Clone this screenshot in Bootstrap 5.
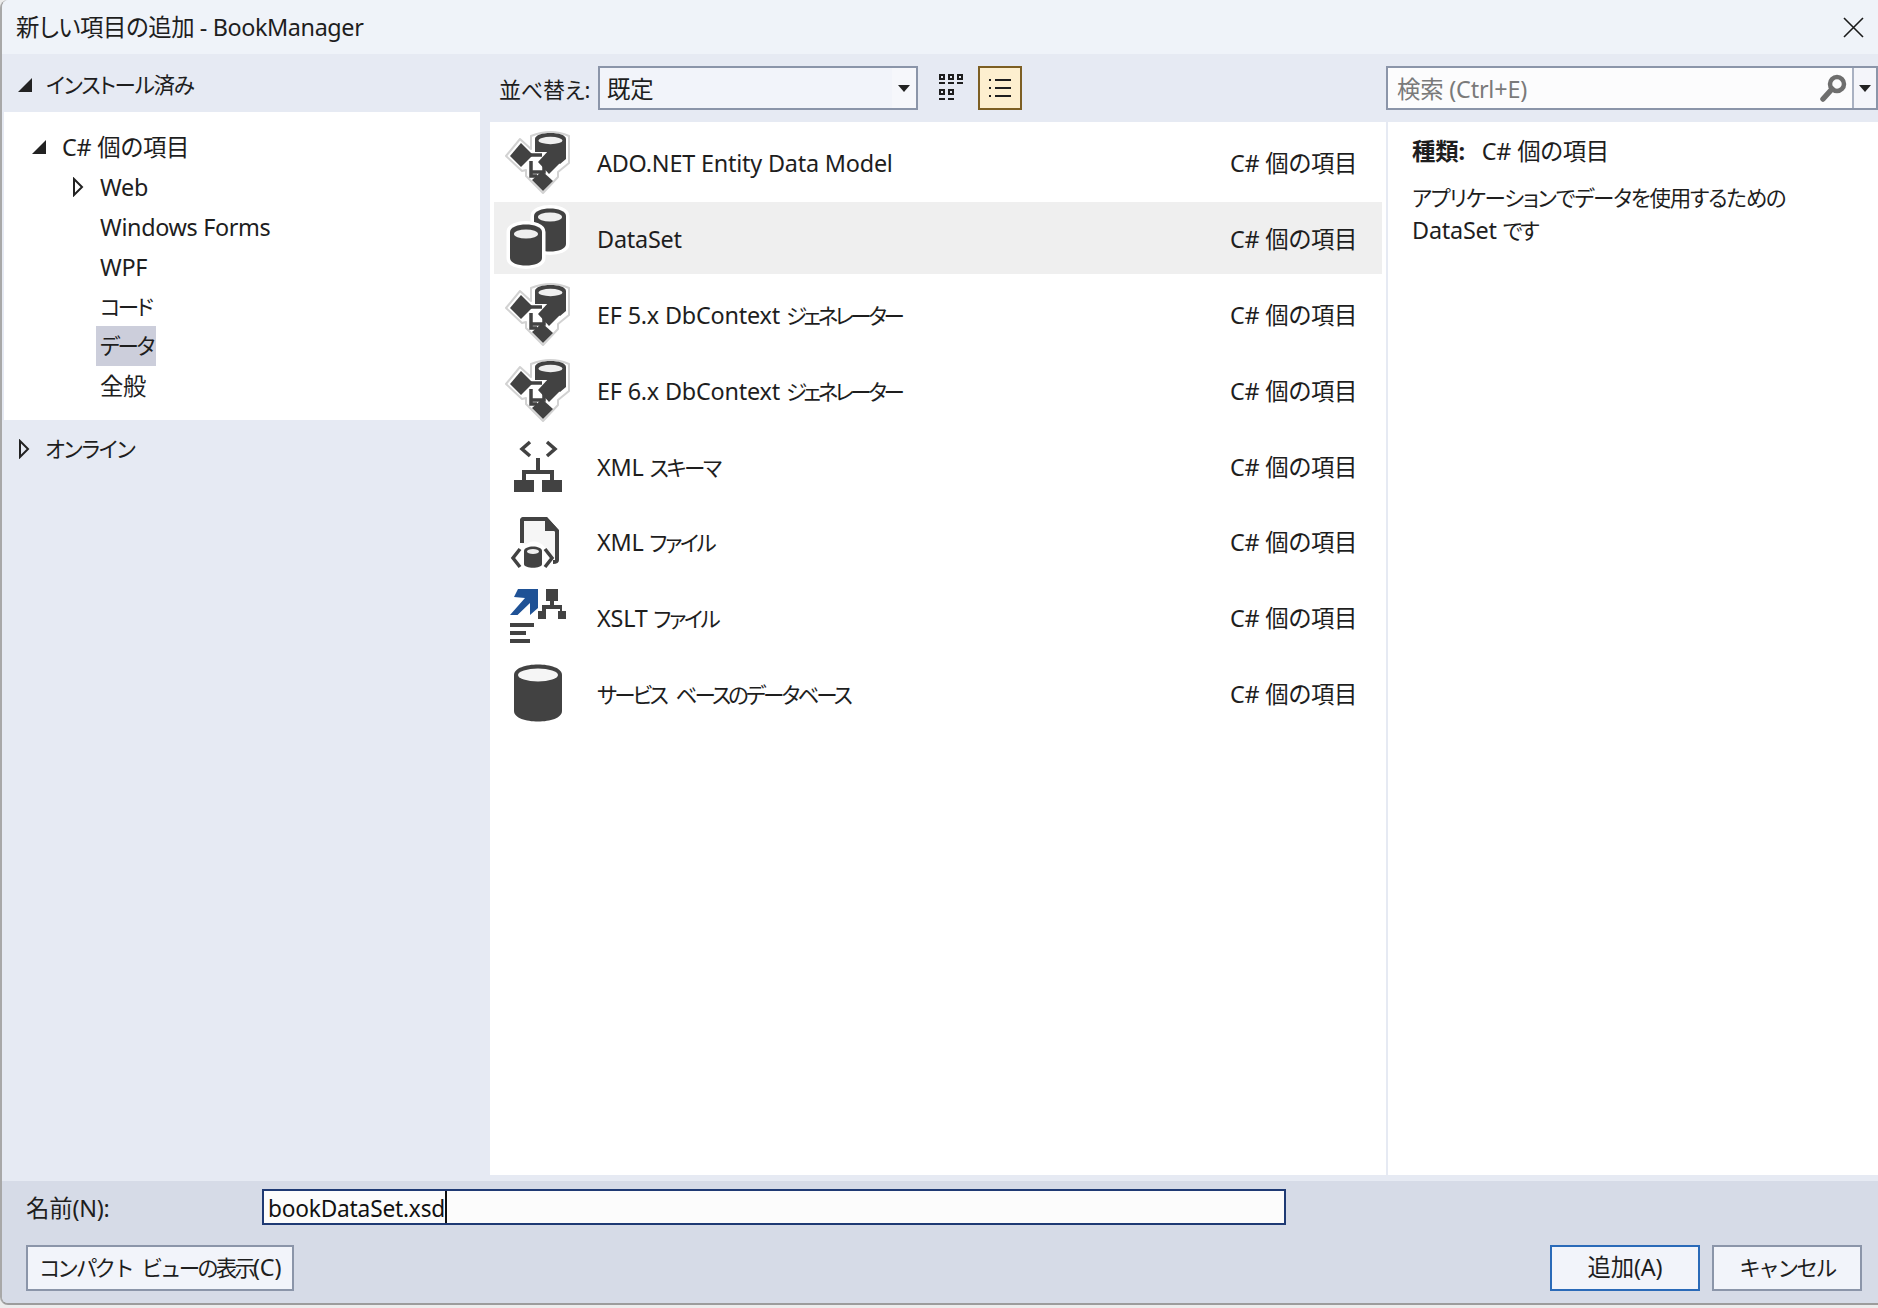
<!DOCTYPE html>
<html lang="ja">
<head>
<meta charset="utf-8">
<title>新しい項目の追加 - BookManager</title>
<link href="https://cdn.jsdelivr.net/npm/bootstrap@5.3.0/dist/css/bootstrap.min.css" rel="stylesheet">
<style>
html,body{height:100%;margin:0}
body{background:#ececec;overflow:hidden;font-family:"Noto Sans","Noto Sans CJK JP",sans-serif;font-size:23.4px;line-height:1.2;color:#1e1e1e;font-feature-settings:"palt";letter-spacing:-.2px}
.kn{font-size:21.5px;letter-spacing:-2.4px}
.kn2{font-size:21.5px;letter-spacing:-1.2px}
.kn3{font-size:21.5px;letter-spacing:-3.4px}
.knw{font-size:21.5px;letter-spacing:-2.9px;word-spacing:7px}
.dlg{height:1305px;background:#e6eaf3;border-left:2px solid #a8a8a8;border-bottom:2px solid #9c9c9c;border-radius:8px 0 0 8px;overflow:hidden}
.tbar{height:54px;flex:none;background:#eff3f9;padding:0 14px}
.tbartext{letter-spacing:-.4px}
.mainrow{flex:1 1 0;min-height:0}
.leftcol{width:488px;flex:none}
.midcol{width:896px;flex:none}
.rightcol{flex:1 1 0;min-width:0}
.treehead{height:58px;padding-left:16px;padding-top:3px}
.treehead2{padding-top:0}
.headgap{margin-right:14px}
.headgap2{margin-right:15px}
.treebox{height:308px;background:#fff;margin:0 10px 0 2px;padding-top:15px}
.treeitem{height:39.8px;display:flex;align-items:center;white-space:nowrap}
.arrowcell{flex:none;display:flex;align-items:center}
.webarrow{width:96px;padding-left:68px}
.treetxt{margin-left:92px;padding:1px 4px 0;height:100%;display:flex;align-items:center;letter-spacing:-.35px}
.seltree{background:#cccedb;width:60px}
.toolzone{height:68px;flex:none}
.sortlabel{margin-left:9px;width:99px;flex:none;font-size:22px;padding-top:2px;white-space:nowrap}
.combo{width:320px;height:44px;border:2px solid #8b95a9;background:#f2f4fa;padding-left:7px}
.combotext{flex:1 1 0;padding-top:2px}
.comboarrow{width:24px;height:100%;background:#f6f7fb;justify-content:center}
.iconbtn{width:44px;height:44px;flex:none;display:flex;align-items:center;justify-content:center}
.gridbtn{margin-left:11px}
.listbtn{margin-left:5px;background:#fdefcf;border:2px solid #7d5f23}
.itemlist{flex:1 1 0;background:#fff;padding:4px 4px 0}
.itemrow{height:72px;margin-bottom:3.9px;padding-left:6px}
.itemrow.hl{background:#efefef}
.itemrow svg{flex:none}
.itemname{margin-left:25px;flex:1 1 0;padding-top:2px}
.itemkind{width:152px;flex:none;padding-top:2px}
.searchbox{height:44px;border:2px solid #8b95a9;background:#fcfcfd}
.searchph{flex:1 1 0;color:#7a7a7a;padding-left:9px;padding-top:2px}
.searchglass{width:36px;display:flex;align-items:center;justify-content:center}
.searchdrop{width:24px;height:100%;border-left:2px solid #a9b1c2;background:#f4f5fa;display:flex;align-items:center;justify-content:center}
.infopane{flex:1 1 0;background:#fff;border-left:2px solid #e6eaf3;padding:15px 0 0 24px}
.infokind{margin-bottom:18px;height:26px}
.infokind b{margin-right:17px;font-weight:700}
.infotext{line-height:32px}
.gapstrip{height:6px;flex:none}
.footzone{height:122px;flex:none;background:#d6dbe7;padding:8px 16px 0 24px}
.namerow{height:36px}
.namelabel{width:236px;flex:none;padding-top:2px}
.namefield{width:1024px;height:36px;background:#fcfcfc;border:2px solid #1f3a74;padding-left:4px;color:#111}
.namecaret{border-right:2px solid #111;height:100%;display:flex;align-items:center;font-size:22.7px;padding-top:3px}
.btnrow{margin-top:20px}
.dlgbtn{--bs-btn-padding-y:0;--bs-btn-padding-x:0;--bs-btn-border-radius:0;--bs-btn-border-width:2px;--bs-btn-border-color:#8b95a9;--bs-btn-bg:#f2f4fa;--bs-btn-color:#1e1e1e;--bs-btn-font-size:23.4px;height:46px;font-family:inherit;letter-spacing:inherit;white-space:nowrap}
.btncompact{width:268px}
.btnadd{width:150px;--bs-btn-border-color:#2a6ab8}
.btncancel{width:150px;margin-left:12px}
</style>
</head>
<body>
<svg width="0" height="0" class="d-block position-absolute">
<defs>
<symbol id="i-ado" viewBox="0 0 72 72">
<path d="M20 13 31 23V10Q51 2 69 10V37L58 46V51L43 67 26 50V44L22 45 6 30Z" fill="#fff" stroke="#d2d2d2" stroke-width="2" stroke-linejoin="round"/>
<path d="M35 13C35 5 66 5 66 13V33L60 38 47 26 35 26Z" fill="#424242"/>
<ellipse cx="50.500" cy="14.500" rx="12" ry="3.700" fill="#efefef"/>
<path d="M21 17 33 29 21 41 10 30Z" fill="#424242"/>
<path d="M49 24 61 36 49 48 38 36Z" fill="#424242"/>
<path d="M42 45 53 55 43 65 32 54Z" fill="#424242"/>
<path d="M30 29H42M31 35V50H37M44 40V46H31" fill="none" stroke="#424242" stroke-width="3.500"/>
</symbol>
<symbol id="i-ds" viewBox="0 0 72 72">
<path d="M34 14C34 4 66 4 66 14V42C66 52 34 52 34 42Z" fill="#424242" stroke="#fff" stroke-width="7" paint-order="stroke"/>
<ellipse cx="50" cy="15" rx="12" ry="4.500" fill="#efefef"/>
<path d="M10 30C10 20 42 20 42 30V56C42 66 10 66 10 56Z" fill="#424242" stroke="#fff" stroke-width="7" paint-order="stroke"/>
<ellipse cx="26" cy="32" rx="12" ry="4.500" fill="#efefef"/>
</symbol>
<symbol id="i-xsd" viewBox="0 0 72 72">
<path d="M30 12 22 19 30 26M47 12 55 19 47 26" fill="none" stroke="#424242" stroke-width="3.500"/>
<path d="M36 28h4v12h14v10h-4v-6H26v6h-4V40h14Z" fill="#424242"/>
<path d="M14 50h20v12H14ZM42 50h20v12H42Z" fill="#424242"/>
</symbol>
<symbol id="i-xml" viewBox="0 0 72 72">
<path d="M22 38V16Q22 14 24 14H46L57 26V55" fill="#f6f6f6" stroke="#424242" stroke-width="4"/>
<path d="M28 14H46L57 26H45V40L32 34 22 40V18Z" fill="#f6f6f6"/>
<path d="M22 38V16Q22 14 24 14H46L57 26V55Q57 57 53 57" fill="none" stroke="#424242" stroke-width="4"/>
<path d="M45 12 59 26H45Z" fill="#424242"/>
<path d="M22 44C28 34 40 34 46 44V66H22Z" fill="#fff"/>
<path d="M20 44 13 53 20 62M45 44 52 53 45 62" fill="none" stroke="#424242" stroke-width="3.500"/>
<path d="M24 46C24 40 42 40 42 46V59C42 64 24 64 24 59Z" fill="#424242"/>
<ellipse cx="33" cy="46.500" rx="6" ry="2.500" fill="#efefef"/>
</symbol>
<symbol id="i-xslt" viewBox="0 0 72 72">
<path d="M18 8H38V27L30 34V22L17.500 34H10L25 17 14 16Z" fill="#1f5296"/>
<path d="M46 8h12v12h-4v4h8v6h4v8h-8v-8h2v-2H46v2h0v8h-8v-8h4v-6h8v-4h-4Z" fill="#424242"/>
<path d="M10 42h24v4H10ZM10 50h16v4H10ZM10 58h20v4H10Z" fill="#424242"/>
</symbol>
<symbol id="i-db" viewBox="0 0 72 72">
<path d="M14 18C14 4 62 4 62 18V54C62 68 14 68 14 54Z" fill="#424242"/>
<ellipse cx="38" cy="18" rx="20" ry="6.500" fill="#f5f5f5"/>
</symbol>
</defs>
</svg>
<div class="dlg d-flex flex-column">
  <div class="tbar d-flex align-items-center justify-content-between">
    <span class="tbartext">新しい項目の追加 - BookManager</span>
    <svg width="21" height="21" viewBox="0 0 21 21"><path d="M1 1 20 20M20 1 1 20" stroke="#1a1a1a" stroke-width="1.600" fill="none"/></svg>
  </div>
  <div class="mainrow d-flex">
    <div class="leftcol d-flex flex-column">
      <div class="treehead d-flex align-items-center">
        <svg class="headgap" width="14" height="14" viewBox="0 0 14 14"><path d="M14 0V14H0Z" fill="#222"/></svg>
        <span class="kn2">インストール済み</span>
      </div>
      <div class="treebox">
        <div class="treeitem"><span class="arrowcell ms-4 ps-1"><svg width="14" height="14" viewBox="0 0 14 14"><path d="M14 0V14H0Z" fill="#222"/></svg></span><span class="ms-3">C# 個の項目</span></div>
        <div class="treeitem"><span class="arrowcell webarrow"><svg width="12" height="20" viewBox="0 0 12 20"><path d="M2 2 10 10 2 18Z" fill="#fff" stroke="#222" stroke-width="2"/></svg></span><span>Web</span></div>
        <div class="treeitem"><span class="treetxt">Windows Forms</span></div>
        <div class="treeitem"><span class="treetxt">WPF</span></div>
        <div class="treeitem"><span class="treetxt"><span class="kn">コード</span></span></div>
        <div class="treeitem"><span class="treetxt seltree"><span class="kn">データ</span></span></div>
        <div class="treeitem"><span class="treetxt">全般</span></div>
      </div>
      <div class="treehead treehead2 d-flex align-items-center">
        <svg class="headgap2" width="12" height="20" viewBox="0 0 12 20"><path d="M2 2 10 10 2 18Z" fill="none" stroke="#222" stroke-width="2"/></svg>
        <span class="kn2">オンライン</span>
      </div>
    </div>
    <div class="midcol d-flex flex-column">
      <div class="toolzone d-flex align-items-center">
        <span class="sortlabel">並べ替え:</span>
        <div class="combo d-flex align-items-center">
          <span class="combotext">既定</span>
          <span class="comboarrow d-flex align-items-center"><svg width="12" height="7" viewBox="0 0 12 7"><path d="M0 0H12L6 7Z" fill="#222"/></svg></span>
        </div>
        <div class="iconbtn gridbtn">
          <svg width="26" height="30" viewBox="0 0 26 30" fill="none" stroke="#1e1e1e" stroke-width="2"><rect x="2" y="2" width="4" height="4"/><rect x="11" y="2" width="4" height="4"/><rect x="20" y="2" width="4" height="4"/><path d="M1 10H7M10 10H16M19 10H25"/><rect x="2" y="17" width="4" height="4"/><rect x="11" y="17" width="4" height="4"/><path d="M1 26H7M10 26H16"/></svg>
        </div>
        <div class="iconbtn listbtn">
          <svg width="24" height="20" viewBox="0 0 24 20" fill="none" stroke="#1e1e1e" stroke-width="2"><path d="M1 2H3M1 10H3M1 18H3M7 2H23M7 10H23M7 18H23"/></svg>
        </div>
      </div>
      <div class="itemlist">
        <div class="itemrow d-flex align-items-center"><svg width="72" height="72"><use href="#i-ado"/></svg><span class="itemname">ADO.NET Entity Data Model</span><span class="itemkind">C# 個の項目</span></div>
        <div class="itemrow hl d-flex align-items-center"><svg width="72" height="72"><use href="#i-ds"/></svg><span class="itemname">DataSet</span><span class="itemkind">C# 個の項目</span></div>
        <div class="itemrow d-flex align-items-center"><svg width="72" height="72"><use href="#i-ado"/></svg><span class="itemname">EF 5.x DbContext <span class="kn3">ジェネレーター</span></span><span class="itemkind">C# 個の項目</span></div>
        <div class="itemrow d-flex align-items-center"><svg width="72" height="72"><use href="#i-ado"/></svg><span class="itemname">EF 6.x DbContext <span class="kn3">ジェネレーター</span></span><span class="itemkind">C# 個の項目</span></div>
        <div class="itemrow d-flex align-items-center"><svg width="72" height="72"><use href="#i-xsd"/></svg><span class="itemname">XML <span class="kn">スキーマ</span></span><span class="itemkind">C# 個の項目</span></div>
        <div class="itemrow d-flex align-items-center"><svg width="72" height="72"><use href="#i-xml"/></svg><span class="itemname">XML <span class="kn">ファイル</span></span><span class="itemkind">C# 個の項目</span></div>
        <div class="itemrow d-flex align-items-center"><svg width="72" height="72"><use href="#i-xslt"/></svg><span class="itemname">XSLT <span class="kn">ファイル</span></span><span class="itemkind">C# 個の項目</span></div>
        <div class="itemrow d-flex align-items-center"><svg width="72" height="72"><use href="#i-db"/></svg><span class="itemname"><span class="knw">サービス ベースのデータベース</span></span><span class="itemkind">C# 個の項目</span></div>
      </div>
    </div>
    <div class="rightcol d-flex flex-column">
      <div class="toolzone d-flex align-items-center">
        <div class="searchbox d-flex align-items-center w-100">
          <span class="searchph">検索 (Ctrl+E)</span>
          <span class="searchglass"><svg width="28" height="28" viewBox="0 0 28 28"><circle cx="17" cy="10" r="7" fill="none" stroke="#6e6e6e" stroke-width="4.500"/><path d="M12 15 3 25" stroke="#6e6e6e" stroke-width="5.500" stroke-linecap="round"/></svg></span>
          <span class="searchdrop"><svg width="12" height="7" viewBox="0 0 12 7"><path d="M0 0H12L6 7Z" fill="#222"/></svg></span>
        </div>
      </div>
      <div class="infopane">
        <div class="infokind"><b>種類:</b>C# 個の項目</div>
        <div class="infotext"><span class="kn2">アプリケーションでデータを使用するための</span><br>DataSet <span class="kn">です</span></div>
      </div>
    </div>
  </div>
  <div class="gapstrip"></div>
  <div class="footzone">
    <div class="namerow d-flex align-items-center">
      <span class="namelabel">名前(N):</span>
      <div class="namefield d-flex align-items-center"><span class="namecaret">bookDataSet.xsd</span></div>
    </div>
    <div class="btnrow d-flex align-items-center">
      <button type="button" class="btn dlgbtn btncompact"><span class="knw">コンパクト ビューの表示</span>(C)</button>
      <span class="flex-grow-1"></span>
      <button type="button" class="btn dlgbtn btnadd">追加(A)</button>
      <button type="button" class="btn dlgbtn btncancel"><span class="kn">キャンセル</span></button>
    </div>
  </div>
</div>
</body>
</html>
